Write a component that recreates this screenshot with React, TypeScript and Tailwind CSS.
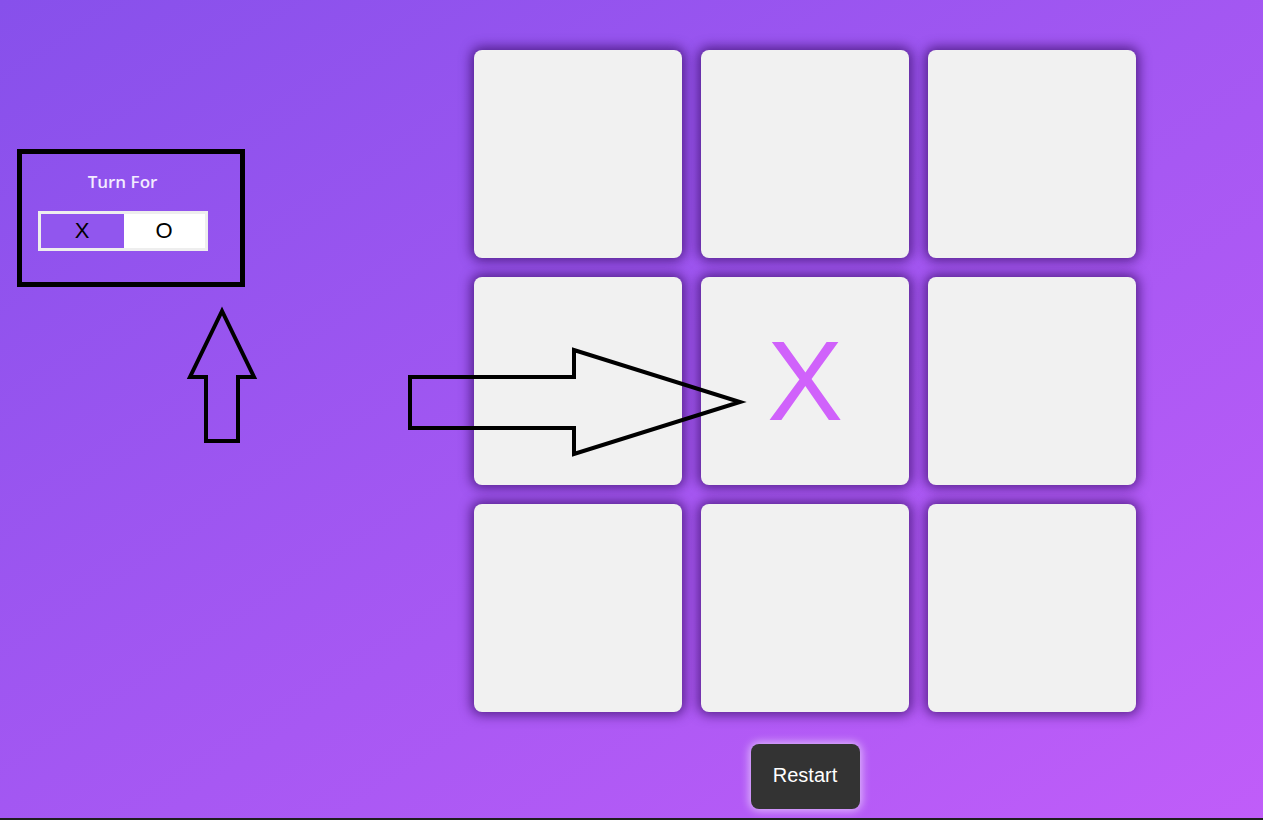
import { useState } from 'react';

const font = { fontFamily: '"Liberation Sans", Arial, sans-serif' };

function Cell({ value, onClick }: { value: string; onClick: () => void }) {
  return (
    <button
      onClick={onClick}
      className="w-[208px] h-[208px] bg-[#f1f1f1] rounded-[8px] shadow-[0_0_12px_3px_rgba(50,8,95,0.7)] flex items-center justify-center text-[114px] leading-none text-[#d062fb]"
      style={font}
    >
      {value}
    </button>
  );
}

export default function App() {
  const [board, setBoard] = useState<string[]>(['', '', '', '', 'X', '', '', '', '']);
  const [turn, setTurn] = useState<'X' | 'O'>('O');

  const play = (i: number) => {
    if (board[i]) return;
    const next = [...board];
    next[i] = turn;
    setBoard(next);
    setTurn(turn === 'X' ? 'O' : 'X');
  };

  return (
    <div className="w-full h-[820px] bg-[#1e1e1e]">
      <div className="relative w-full h-[818px] bg-linear-to-br from-[#8750eb] to-[#c05df9] flex overflow-hidden">
        {/* Turn indicator */}
        <aside className="w-[474px] shrink-0 pl-[17px] pt-[149px]">
          <div className="w-[228px] h-[138px] border-[5px] border-black flex flex-col items-center pt-[15px] pr-[17px]">
            <span className="text-[17px] font-semibold text-[#f3ecff]" style={{ fontFamily: '"Open Sans", sans-serif' }}>
              Turn For
            </span>
            <div className="mt-[16px] w-[170px] h-[40px] border-[3px] border-[#eeeeee] flex" style={font}>
              <div className="w-[83px] flex items-center justify-center bg-[#9156ee] text-[22px] text-black">X</div>
              <div className="flex-1 flex items-center justify-center bg-white text-[22px] text-black">O</div>
            </div>
          </div>
        </aside>

        {/* Board */}
        <main className="flex flex-col items-center pt-[50px]">
          <div className="grid grid-cols-3 gap-[19px]">
            {board.map((v, i) => (
              <Cell key={i} value={v} onClick={() => play(i)} />
            ))}
          </div>
          <button
            onClick={() => {
              setBoard(['', '', '', '', '', '', '', '', '']);
              setTurn('X');
            }}
            className="mt-[32px] w-[109px] h-[65px] rounded-[8px] bg-[#333333] text-white text-[20px] pb-[3px] shadow-[0_0_8px_2px_rgba(255,255,255,0.55)]"
            style={font}
          >
            Restart
          </button>
        </main>

        {/* Annotation arrows */}
        <svg className="absolute inset-0 pointer-events-none" width="1263" height="818">
          <polygon
            points="222,311 190,377 206,377 206,441 238,441 238,377 254,377"
            fill="none"
            stroke="black"
            strokeWidth="4"
            strokeLinejoin="miter"
          />
          <polygon
            points="410,377 574,377 574,350 740,402 574,454 574,428 410,428"
            fill="none"
            stroke="black"
            strokeWidth="4"
            strokeLinejoin="miter"
          />
        </svg>
      </div>
    </div>
  );
}
